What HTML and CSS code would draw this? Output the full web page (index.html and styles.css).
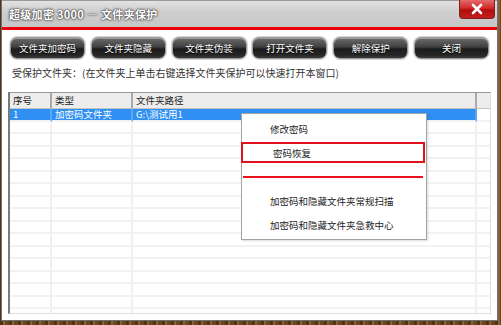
FILE: index.html
```html
<!DOCTYPE html>
<html lang="zh-CN">
<head>
<meta charset="utf-8">
<title>超级加密 3000 — 文件夹保护</title>
<link rel="stylesheet" href="styles.css">
</head>
<body>
<div class="win">
  <div class="titlebar">
    <span class="title">超级加密 3000 — 文件夹保护</span>
    <div class="close">
      <svg width="14" height="12" viewBox="0 0 14 12"><path d="M3 2 L11 10 M11 2 L3 10" stroke="#fff" stroke-width="2.6" stroke-linecap="round"/></svg>
    </div>
  </div>
  <div class="redline"></div>
  <div class="content">
    <div class="toolbar">
      <div class="btn">文件夹加密码</div>
      <div class="btn">文件夹隐藏</div>
      <div class="btn">文件夹伪装</div>
      <div class="btn">打开文件夹</div>
      <div class="btn">解除保护</div>
      <div class="btn">关闭</div>
    </div>
    <div class="hint">受保护文件夹：(在文件夹上单击右键选择文件夹保护可以快速打开本窗口)</div>
    <div class="table">
      <div class="row head">
        <div class="c">序号</div><div class="c">类型</div><div class="c">文件夹路径</div><div class="c last"></div>
      </div>
      <div class="row sel">
        <div class="c">1</div><div class="c">加密码文件夹</div><div class="c">G:\测试用1</div><div class="c last"></div>
      </div>
      <div class="row"><div class="c"></div><div class="c"></div><div class="c"></div><div class="c last"></div></div>
      <div class="row"><div class="c"></div><div class="c"></div><div class="c"></div><div class="c last"></div></div>
      <div class="row"><div class="c"></div><div class="c"></div><div class="c"></div><div class="c last"></div></div>
      <div class="row"><div class="c"></div><div class="c"></div><div class="c"></div><div class="c last"></div></div>
      <div class="row"><div class="c"></div><div class="c"></div><div class="c"></div><div class="c last"></div></div>
      <div class="row"><div class="c"></div><div class="c"></div><div class="c"></div><div class="c last"></div></div>
      <div class="row"><div class="c"></div><div class="c"></div><div class="c"></div><div class="c last"></div></div>
      <div class="row"><div class="c"></div><div class="c"></div><div class="c"></div><div class="c last"></div></div>
      <div class="row"><div class="c"></div><div class="c"></div><div class="c"></div><div class="c last"></div></div>
      <div class="row"><div class="c"></div><div class="c"></div><div class="c"></div><div class="c last"></div></div>
      <div class="row"><div class="c"></div><div class="c"></div><div class="c"></div><div class="c last"></div></div>
      <div class="row"><div class="c"></div><div class="c"></div><div class="c"></div><div class="c last"></div></div>
      <div class="row"><div class="c"></div><div class="c"></div><div class="c"></div><div class="c last"></div></div>
      <div class="row"><div class="c"></div><div class="c"></div><div class="c"></div><div class="c last"></div></div>
      <div class="row"><div class="c"></div><div class="c"></div><div class="c"></div><div class="c last"></div></div>
      <div class="row"><div class="c"></div><div class="c"></div><div class="c"></div><div class="c last"></div></div>
    </div>
  </div>
  <div class="menu">
    <div class="mi first">修改密码</div>
    <div class="mi hl">密码恢复</div>
    <div class="sep"></div>
    <div class="mi gap">加密码和隐藏文件夹常规扫描</div>
    <div class="mi">加密码和隐藏文件夹急救中心</div>
  </div>
</div>
</body>
</html>
```

FILE: styles.css
```css
html, body {
  margin: 0;
  height: 100%;
}
body {
  overflow: hidden;
  font-family: "Noto Sans CJK SC", "Noto Sans", sans-serif;
  background:
    repeating-linear-gradient(90deg, rgba(0,0,0,.25) 0 3px, rgba(255,190,110,.22) 3px 5px, rgba(0,0,0,0) 5px 9px),
    #6a4522;
}
.win {
  position: relative;
  margin-left: 1px;
  width: 497px;
  height: 321px;
  box-sizing: border-box;
  border: 1px solid #707070;
  border-top: none;
  background: #fff;
  display: flex;
  flex-direction: column;
}
.titlebar {
  height: 27px;
  flex: none;
  display: flex;
  align-items: center;
  padding-left: 7px;
  background: linear-gradient(#e2e2e2, #cfcfcf 40%, #c6c6c6);
  border-top: 1px solid #9a9a9a;
  box-sizing: border-box;
}
.title {
  color: #fff;
  font-weight: bold;
  font-size: 11px;
  letter-spacing: 0.3px;
  text-shadow: 0 0 2px #444, 0 0 1px #222, 0 0 3px #666;
}
.close {
  margin-left: auto;
  margin-right: 2px;
  align-self: flex-start;
  margin-top: -1px;
  width: 36px;
  height: 19px;
  box-sizing: border-box;
  border: 1px solid #7d2020;
  border-top: none;
  border-radius: 0 0 4px 4px;
  background: linear-gradient(#e46a6a, #d02a2a 45%, #b30c0c 55%, #c41e1e);
  display: flex;
  align-items: center;
  justify-content: center;
}
.redline {
  height: 3px;
  flex: none;
  background: #ee0008;
}
.content {
  flex: 1;
  padding: 7px 6px 0 6px;
  display: flex;
  flex-direction: column;
}
.toolbar {
  display: flex;
  justify-content: space-between;
  margin-left: 2px;
  width: 479px;
}
.btn {
  width: 75px;
  height: 22px;
  box-sizing: border-box;
  border-radius: 7px;
  border: 1px solid #9a9a9a;
  box-shadow: 0 0 0 1px #d6d6d6, inset 0 1px 0 rgba(255,255,255,.35);
  background: linear-gradient(#6b6b6b, #404040 45%, #1c1c1c 55%, #262626 85%, #3a3a3a);
  color: #fff;
  font-size: 9.5px;
  display: flex;
  align-items: center;
  justify-content: center;
  text-shadow: 0 1px 1px #000;
}
.hint {
  margin: 7px 0 0 4px;
  font-size: 10px;
  line-height: 14px;
  color: #333;
}
.table {
  margin-top: 12px;
  width: 483px;
  height: 222px;
  box-sizing: border-box;
  border-left: 2px solid #7a7a7a;
  border-top: 1px solid #9a9a9a;
  border-right: 1px solid #dedede;
  border-bottom: 1px solid #dedede;
  overflow: hidden;
  font-size: 9.5px;
  color: #222;
}
.row {
  display: grid;
  grid-template-columns: 42px 81px 344px 1fr;
  height: 12.5px;
}
.c {
  box-sizing: border-box;
  border-right: 2px solid #f0f0f0;
  border-bottom: 2px solid #f2f2f2;
  padding-left: 3px;
  line-height: 10.5px;
  white-space: nowrap;
}
.c.last {
  border-right: none;
}
.row.head {
  height: 16px;
  background: #ededed;
}
.row.head .c {
  border-right: 2px solid #a9a9a9;
  border-bottom: 1px solid #c4c4c4;
  line-height: 15px;
}
.row.head .c.last {
  border-right: none;
}
.row.sel .c {
  background: #2f8ff2;
  color: #fff;
  border-right-color: #5aa6f4;
  border-bottom-color: #f2f2f2;
}
.row.sel .c.last {
  background: #fff;
}
.menu {
  position: absolute;
  left: 239px;
  top: 113px;
  width: 186px;
  height: 127px;
  box-sizing: border-box;
  border: 1px solid #a3a3a3;
  background: #fff;
  box-shadow: 1px 1px 2px rgba(0,0,0,.15);
  font-size: 9.5px;
  color: #222;
  display: flex;
  flex-direction: column;
}
.mi {
  height: 24px;
  flex: none;
  display: flex;
  align-items: center;
  padding-left: 28px;
}
.mi.first {
  margin-top: 3px;
}
.mi.hl {
  height: 21px;
  margin-top: 1px;
  margin-left: -1px;
  margin-right: 1px;
  box-sizing: border-box;
  border: 2px solid #e2121c;
  padding-left: 30px;
}
.sep {
  height: 2px;
  flex: none;
  margin: 13px 3px 0 1px;
  background: #e8101a;
}
.mi.gap {
  margin-top: 11px;
}
```
